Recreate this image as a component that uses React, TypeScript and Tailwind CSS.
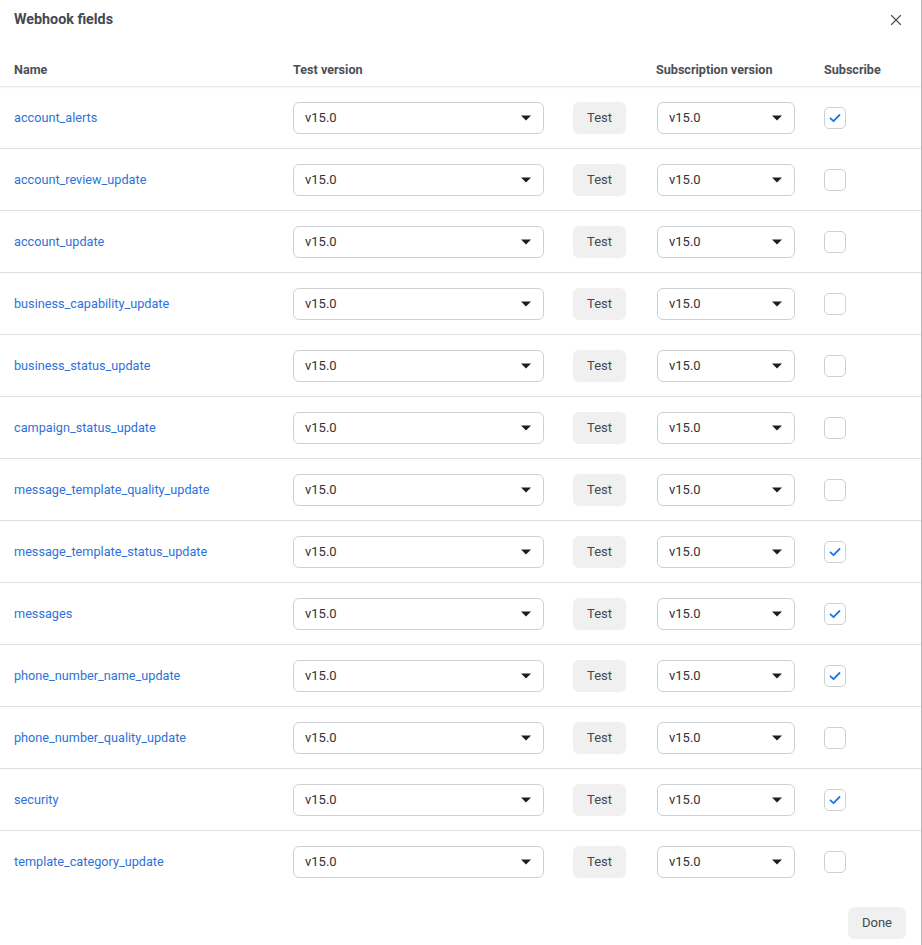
import { X } from 'lucide-react';

interface WebhookField {
  name: string;
  subscribed: boolean;
}

const fields: WebhookField[] = [
  { name: 'account_alerts', subscribed: true },
  { name: 'account_review_update', subscribed: false },
  { name: 'account_update', subscribed: false },
  { name: 'business_capability_update', subscribed: false },
  { name: 'business_status_update', subscribed: false },
  { name: 'campaign_status_update', subscribed: false },
  { name: 'message_template_quality_update', subscribed: false },
  { name: 'message_template_status_update', subscribed: true },
  { name: 'messages', subscribed: true },
  { name: 'phone_number_name_update', subscribed: true },
  { name: 'phone_number_quality_update', subscribed: false },
  { name: 'security', subscribed: true },
  { name: 'template_category_update', subscribed: false },
];

function VersionSelect({ width }: { width: string }) {
  return (
    <div
      className={`${width} h-[32px] flex items-center justify-between pl-[11px] pr-[12px] border border-[#ccd0d5] rounded-[6px] bg-white text-[13px] text-[#303338]`}
    >
      <span>v15.0</span>
      <svg width="10" height="6" viewBox="0 0 10 6" className="text-[#1c1e21]">
        <path d="M0 0.5h10L5 5.5z" fill="currentColor" />
      </svg>
    </div>
  );
}

function Checkbox({ checked }: { checked: boolean }) {
  return (
    <div className="w-[22px] h-[22px] rounded-[5px] border border-[#ccd0d5] bg-white flex items-center justify-center">
      {checked && (
        <svg width="14" height="14" viewBox="0 0 14 14">
          <path
            d="M2.5 7.3l3 2.9 6-6.2"
            fill="none"
            stroke="#1877f2"
            strokeWidth="1.8"
            strokeLinecap="round"
            strokeLinejoin="round"
          />
        </svg>
      )}
    </div>
  );
}

export default function App() {
  return (
    <div
      className="w-[922px] h-[945px] bg-white flex flex-col border-r border-[#b8b8b8] overflow-hidden"
      style={{ fontFamily: 'Roboto, "Liberation Sans", sans-serif' }}
    >
      <div className="h-[39px] flex items-center justify-between pl-[14px] pr-[16px]">
        <h1 className="text-[14.3px] font-bold text-[#444950]">Webhook fields</h1>
        <X className="w-[18px] h-[18px] text-[#444950]" strokeWidth={1.5} />
      </div>

      <div className="h-[48px] flex items-end pb-[8px] px-[14px] text-[12.6px] font-bold text-[#4b4f56] leading-4 border-b border-[#e8e8e8] shadow-[0_1px_2px_rgba(0,0,0,0.04)]">
        <div className="w-[279px]">Name</div>
        <div className="w-[363px]">Test version</div>
        <div className="w-[168px]">Subscription version</div>
        <div>Subscribe</div>
      </div>

      <div className="flex flex-col">
        {fields.map((field, index) => (
          <div
            key={field.name}
            className={`h-[62px] flex items-center px-[14px] ${index < fields.length - 1 ? 'border-b border-[#dadde1]' : ''}`}
          >
            <a className="w-[279px] text-[12.7px] text-[#2d72d9] truncate" href="#">
              {field.name}
            </a>
            <VersionSelect width="w-[251px]" />
            <button className="ml-[29px] w-[53px] h-[32px] rounded-[6px] bg-[#f0f0f0] text-[13px] text-[#444950]">
              Test
            </button>
            <div className="ml-[31px]">
              <VersionSelect width="w-[138px]" />
            </div>
            <div className="ml-[29px]">
              <Checkbox checked={field.subscribed} />
            </div>
          </div>
        ))}
      </div>

      <div className="flex justify-end pr-[15px] pt-[14px]">
        <button className="w-[58px] h-[32px] rounded-[6px] bg-[#f0f0f0] text-[13px] text-[#444950]">
          Done
        </button>
      </div>
    </div>
  );
}
